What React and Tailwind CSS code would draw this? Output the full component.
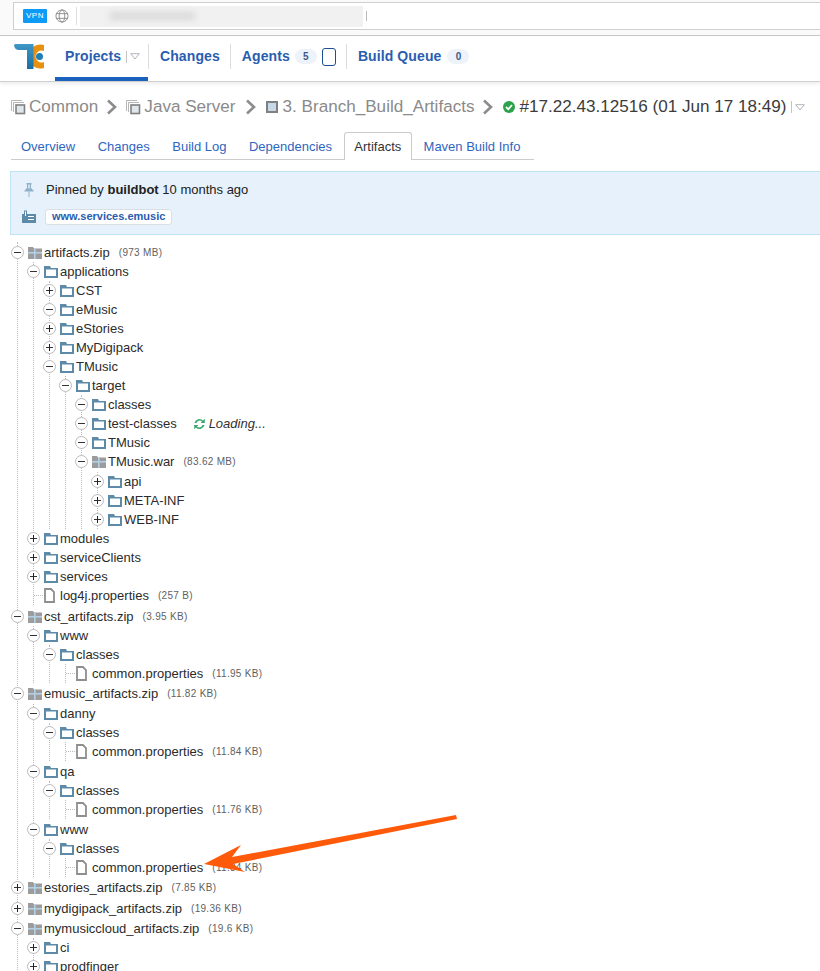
import React from "react";

const Chevron = ({ className = "mx-[8px]" }) => (
  <svg width="12" height="16" viewBox="0 0 12 16" className={className}>
    <path d="M2 1.5 L9 8 L2 14.5" fill="none" stroke="#8c8c8c" strokeWidth="2.6" />
  </svg>
);

const SmallCaret = () => (
  <span className="flex items-center">
    <span className="w-px h-[12px] bg-[#c4c4c4] mr-[3px]" />
    <svg width="10" height="7" viewBox="0 0 10 7">
      <path d="M0.7 0.7 H9.3 L5 6 Z" fill="#fff" stroke="#aeb4ba" />
    </svg>
  </span>
);

const ProjectIcon = () => (
  <svg width="15" height="15" viewBox="0 0 15 15" className="mr-[3px]">
    <path d="M0.5 11 V0.5 H11" fill="none" stroke="#b5b5b5" />
    <path d="M2.5 12 V2.5 H13" fill="none" stroke="#b5b5b5" />
    <rect x="5" y="5" width="8.5" height="8.5" fill="#dfe6ec" stroke="#808080" strokeWidth="1.6" />
  </svg>
);

const FolderIcon = () => (
  <svg width="14" height="12" viewBox="0 0 14 12" className="shrink-0">
    <path d="M0 0 H6 L7 2 H14 V12 H0 Z" fill="#5d8aa8" />
    <rect x="2" y="3.5" width="10" height="6.5" fill="#fff" />
  </svg>
);

const ZipIcon = () => (
  <svg width="14" height="12" viewBox="0 0 14 12" className="shrink-0">
    <path d="M0 0 H5 L6 1.5 H14 V12 H0 Z" fill="#9c9c9c" />
    <rect x="0" y="5" width="14" height="1.6" fill="#b4d0e4" />
    <rect x="6" y="1.5" width="1.6" height="10.5" fill="#b4d0e4" />
  </svg>
);

const FileIcon = () => (
  <svg width="11" height="15" viewBox="0 0 11 15" className="shrink-0">
    <path d="M1 1 H7 L10 4 V14 H1 Z" fill="#fff" stroke="#8e8e8e" strokeWidth="1.8" />
  </svg>
);

const Expander = ({ open }) => (
  <span className="relative shrink-0 w-[13px] h-[13px] rounded-full border border-[#bbb] bg-white flex items-center justify-center">
    <span className="w-[7px] h-px bg-[#333]" />
    {!open && <span className="absolute w-px h-[7px] bg-[#222]" />}
  </span>
);

// t: row sits one pixel lower than the regular 19px rhythm
const tree = [
  { n: "artifacts.zip", s: "(973 MB)", zip: 1, open: 1, kids: [
    { n: "applications", open: 1, kids: [
      { n: "CST" },
      { n: "eMusic", open: 1 },
      { n: "eStories" },
      { n: "MyDigipack" },
      { n: "TMusic", open: 1, kids: [
        { n: "target", open: 1, kids: [
          { n: "classes", open: 1 },
          { n: "test-classes", open: 1, loading: 1 },
          { n: "TMusic", open: 1 },
          { n: "TMusic.war", s: "(83.62 MB)", zip: 1, open: 1, kids: [
            { n: "api", t: 1 },
            { n: "META-INF" },
            { n: "WEB-INF" },
          ] },
        ] },
      ] },
    ] },
    { n: "modules" },
    { n: "serviceClients" },
    { n: "services" },
    { n: "log4j.properties", s: "(257 B)", file: 1 },
  ] },
  { n: "cst_artifacts.zip", s: "(3.95 KB)", zip: 1, open: 1, t: 1, kids: [
    { n: "www", open: 1, kids: [
      { n: "classes", open: 1, kids: [{ n: "common.properties", s: "(11.95 KB)", file: 1 }] },
    ] },
  ] },
  { n: "emusic_artifacts.zip", s: "(11.82 KB)", zip: 1, open: 1, kids: [
    { n: "danny", open: 1, t: 1, kids: [
      { n: "classes", open: 1, kids: [{ n: "common.properties", s: "(11.84 KB)", file: 1 }] },
    ] },
    { n: "qa", open: 1, t: 1, kids: [
      { n: "classes", open: 1, kids: [{ n: "common.properties", s: "(11.76 KB)", file: 1 }] },
    ] },
    { n: "www", open: 1, t: 1, kids: [
      { n: "classes", open: 1, kids: [{ n: "common.properties", s: "(11.84 KB)", file: 1 }] },
    ] },
  ] },
  { n: "estories_artifacts.zip", s: "(7.85 KB)", zip: 1 },
  { n: "mydigipack_artifacts.zip", s: "(19.36 KB)", zip: 1, t: 1 },
  { n: "mymusiccloud_artifacts.zip", s: "(19.6 KB)", zip: 1, open: 1, kids: [
    { n: "ci" },
    { n: "prodfinger" },
  ] },
];

const Node = ({ item, top }) => (
  <div className={`${top ? "pt-[1px]" : ""} ${item.t ? "mt-[1px]" : ""}`}>
    <div className="flex items-center h-[19px] -ml-[7px]">
      {item.file ? (
        <span className="shrink-0 w-[17px] ml-[7px] border-t border-dotted border-[#bbb]" />
      ) : (
        <Expander open={item.open} />
      )}
      <span className={item.file ? "-ml-[7px] mr-[5px] flex" : "ml-[4px] mr-[2px] flex"}>
        {item.file ? <FileIcon /> : item.zip ? <ZipIcon /> : <FolderIcon />}
      </span>
      <span className="text-[13px] text-[#2b2b2b] whitespace-nowrap">{item.n}</span>
      {item.s && (
        <span className="ml-[9px] text-[10px] text-[#5f5f5f] tracking-[0.3px] whitespace-nowrap">{item.s}</span>
      )}
      {item.loading && (
        <span className="ml-[16px] flex items-center text-[13px] italic text-[#333]">
          <svg width="13" height="12" viewBox="0 0 13 12" className="mr-[3px]">
            <path d="M1.5 5 A5 5 0 0 1 10 2.5 L11.8 0.8 V5 H7.6 L9 3.6 A3.3 3.3 0 0 0 3.5 5 Z" fill="#3aa76d" />
            <path d="M11.5 7 A5 5 0 0 1 3 9.5 L1.2 11.2 V7 H5.4 L4 8.4 A3.3 3.3 0 0 0 9.5 7 Z" fill="#3aa76d" />
          </svg>
          Loading...
        </span>
      )}
    </div>
    {item.kids && <Branch items={item.kids} />}
  </div>
);

const Branch = ({ items, root }) => (
  <div className={root ? "ml-[17px] border-l border-dotted border-[#bbb]" : "ml-[15px] border-l border-dotted border-[#bbb]"}>
    {items.map((it) => (
      <Node key={it.n} item={it} top={root} />
    ))}
  </div>
);

const navLink = "text-[14px] font-bold text-[#2a5db0] tracking-[0.1px]";
const badge = "w-[22px] h-[15px] rounded-full bg-[#eef3fa] text-[10px] font-bold text-[#3a5a8c] flex items-center justify-center";
const tab = "px-[11.25px] pb-[5px] text-[13px] leading-[15px] text-[#2f66c0]";

export default function App() {
  return (
    <div className="relative w-[820px] h-[971px] overflow-hidden bg-white font-['Liberation_Sans',Arial,sans-serif]">
      {/* browser address bar */}
      <div className="h-[36px] bg-[#fafafa] pt-[2px] pl-[13px] border-b border-[#c8c8c8]">
        <div className="h-[28px] bg-white border border-[#cfcfcf] border-r-0 flex items-center pl-[9px]">
          <span className="w-[24px] h-[14px] rounded-[1px] bg-[#0d9bf7] text-white text-[8px] tracking-[0.6px] flex items-center justify-center">VPN</span>
          <svg width="14" height="14" viewBox="0 0 15 15" className="ml-[8px]" fill="none" stroke="#8a8a8a">
            <circle cx="7.5" cy="7.5" r="6.5" />
            <ellipse cx="7.5" cy="7.5" rx="3" ry="6.5" />
            <path d="M1 5 H14 M1 10 H14" />
          </svg>
          <span className="ml-[7px] w-px h-[18px] bg-[#ddd]" />
          <div className="ml-[3px] w-[283px] h-[21px] bg-[#f1f1f1] flex items-center pl-[30px]">
            <span className="w-[85px] h-[8px] bg-[#d9d9d9] blur-[3px]" />
          </div>
          <span className="ml-[3px] w-px h-[10px] bg-[#bbb]" />
        </div>
      </div>

      {/* top nav */}
      <div className="h-[46px] pb-[4px] border-b border-[#cfcfcf] shadow-[0_2px_4px_rgba(0,0,0,0.08)] flex items-center">
        <svg width="31" height="26" viewBox="0 0 31 26" className="ml-[14px]">
          <defs>
            <linearGradient id="tc" x1="0" y1="0" x2="0" y2="1">
              <stop offset="0" stopColor="#3f97c6" />
              <stop offset="1" stopColor="#1b6ea3" />
            </linearGradient>
          </defs>
          <path d="M30 1 A12.5 12 0 1 0 30 24 L30 18 A6 6 0 1 1 30 7 Z" fill="#e8900f" />
          <path d="M1.5 0 H19.5 V25 H13 V6 H5 Q1 6 0 1.5 Q0 0 1.5 0 Z" fill="url(#tc)" />
          <circle cx="25.5" cy="12.5" r="3.5" fill="#1d7fb5" />
        </svg>
        <div className="relative h-[41px] ml-[10px] w-[93px] pl-[10px] flex items-center">
          <span className={navLink}>Projects</span>
          <span className="ml-[5px]"><SmallCaret /></span>
          <span className="absolute left-0 right-0 -bottom-[4px] h-[4px] bg-[#1b62bd]" />
        </div>
        <span className="w-px h-[25px] bg-[#dcdcdc]" />
        <span className={`${navLink} ml-[11px] mr-[10px]`}>Changes</span>
        <span className="w-px h-[25px] bg-[#dcdcdc]" />
        <span className={`${navLink} ml-[11px] mr-[5px]`}>Agents</span>
        <span className={badge}>5</span>
        <span className="ml-[5px] w-[14px] h-[18px] rounded-[3px] border border-[#1c4f8f]" />
        <span className="ml-[10px] w-px h-[25px] bg-[#dcdcdc]" />
        <span className={`${navLink} ml-[11px] mr-[6px]`}>Build Queue</span>
        <span className={badge}>0</span>
      </div>

      {/* breadcrumb */}
      <div className="h-[50px] pl-[11px] flex items-center text-[17.1px] text-[#8a8a8a] whitespace-nowrap">
        <ProjectIcon />
        <span>Common</span>
        <Chevron className="mx-[8px]" />
        <ProjectIcon />
        <span>Java Server</span>
        <Chevron className="mx-[9px]" />
        <svg width="12" height="12" viewBox="0 0 12 12" className="mr-[5px]">
          <rect x="1" y="1" width="10" height="10" fill="#c7d8e6" stroke="#808080" strokeWidth="2" />
        </svg>
        <span>3. Branch_Build_Artifacts</span>
        <Chevron />
        <svg width="12" height="12" viewBox="0 0 12 12" className="ml-[1px] mr-[4px]">
          <circle cx="6" cy="6" r="6" fill="#2ca24a" />
          <path d="M3 6 L5.3 8.3 L9 4" fill="none" stroke="#fff" strokeWidth="1.8" />
        </svg>
        <span className="text-[#3c3c3c]">#17.22.43.12516 (01 Jun 17 18:49)</span>
        <span className="ml-[4px]"><SmallCaret /></span>
      </div>

      {/* tabs */}
      <div className="ml-[11px] w-[523px] h-[28px] border-b border-[#ccc] flex items-end">
        <span className={`${tab} pl-[10px]`}>Overview</span>
        <span className={tab}>Changes</span>
        <span className={tab}>Build Log</span>
        <span className={tab}>Dependencies</span>
        <span className="h-[28px] -mb-px ml-[1px] pl-[9px] pr-[10px] pt-[6px] bg-white border border-b-0 border-[#ccc] rounded-t-[3px] text-[13px] leading-[15px] text-[#333]">Artifacts</span>
        <span className={tab}>Maven Build Info</span>
      </div>

      {/* pinned panel */}
      <div className="mt-[11px] ml-[10px] h-[64px] bg-[#e6f1fb] border border-[#bfe3f0] border-r-0 flex flex-col justify-center gap-[7px] pl-[11px]">
        <div className="flex items-center h-[20px] text-[13px] text-[#222]">
          <svg width="14" height="15" viewBox="0 0 14 15" className="mr-[10px]">
            <path d="M4.5 1 H9.5 V2.5 H9 V6 L11.5 8.5 V9.5 H2.5 V8.5 L5 6 V2.5 H4.5 Z" fill="#8fb0c8" />
            <rect x="6" y="2.5" width="2" height="4" fill="#cfe0ec" />
            <path d="M7 9.5 V15" stroke="#a9c3d6" strokeWidth="1.4" />
          </svg>
          <span>Pinned by <b>buildbot</b> 10 months ago</span>
        </div>
        <div className="flex items-center h-[20px]">
          <svg width="14" height="13" viewBox="0 0 14 13" className="mr-[9px]">
            <path d="M0 4 H2 V0.5 H5 V4 H14 V13 H0 Z" fill="#5d8aa8" />
            <path d="M3 1.5 H4 V6 H3 Z M6 6 H12 V7 H6 Z M6 9 H12 V10 H6 Z" fill="#fff" />
          </svg>
          <span className="h-[16px] px-[6px] rounded-[3px] bg-white border border-[#dadfe4] text-[11px] font-bold text-[#2a5db0] flex items-center">www.services.emusic</span>
        </div>
      </div>

      {/* artifacts tree */}
      <div className="mt-[7px]">
        <Branch items={tree} root />
      </div>

      {/* annotation arrow */}
      <svg className="absolute left-0 top-0 pointer-events-none" width="820" height="971" viewBox="0 0 820 971">
        <path d="M204 864 L241 845 L232 857 L456 815 L457 819 L233 864 L245 872 Z" fill="#ff5a0a" />
      </svg>
    </div>
  );
}
